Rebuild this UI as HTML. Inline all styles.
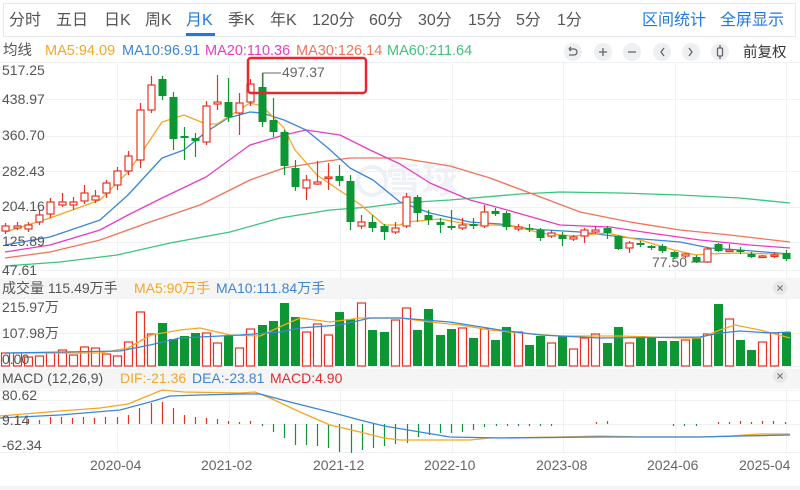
<!DOCTYPE html>
<html><head><meta charset="utf-8">
<style>
html,body{margin:0;padding:0;background:#fff;width:800px;height:490px;overflow:hidden}
body{font-family:"Liberation Sans","Noto Sans CJK SC",sans-serif}
svg{display:block}
</style></head>
<body>
<svg id="s" width="800" height="490" xmlns="http://www.w3.org/2000/svg" font-family="Liberation Sans, Noto Sans CJK SC, sans-serif">
<rect x="3.5" y="3.5" width="792" height="33" fill="#fff" stroke="#e6e8ec"/>
<g font-size="16" fill="#555">
<text x="9" y="25">分时</text><text x="56" y="25">五日</text><text x="104" y="25">日K</text><text x="145" y="25">周K</text>
<text x="186" y="25" fill="#1f7ae0">月K</text><text x="228" y="25">季K</text><text x="270" y="25">年K</text>
<text x="312" y="25">120分</text><text x="369" y="25">60分</text><text x="418" y="25">30分</text><text x="468" y="25">15分</text><text x="516" y="25">5分</text><text x="557" y="25">1分</text>
<text x="642" y="25" fill="#1f7ae0">区间统计</text><text x="720" y="25" fill="#1f7ae0">全屏显示</text>
</g>
<rect x="186" y="33" width="29" height="3" fill="#1f7ae0"/>
<g font-size="14.5">
<text x="3" y="55" fill="#555">均线</text>
<text x="45" y="55" fill="#f5a623">MA5:94.09</text>
<text x="122" y="55" fill="#3a86d8">MA10:96.91</text>
<text x="205" y="55" fill="#e83cc4">MA20:110.36</text>
<text x="296" y="55" fill="#f27357">MA30:126.14</text>
<text x="387" y="55" fill="#3cc47a">MA60:211.64</text>
</g>
<g fill="#eeeff2">
<circle cx="573" cy="52" r="9"/><circle cx="603" cy="52" r="9"/><circle cx="632" cy="52" r="9"/><circle cx="662" cy="52" r="9"/><circle cx="691" cy="52" r="9"/><circle cx="720" cy="52" r="9"/>
</g>
<g stroke="#666" stroke-width="1.3" fill="none">
<path d="M569 49h5a3 3 0 0 1 0 6h-5M569 49l2-2M569 49l2 2"/>
<path d="M599 52h8M603 48v8"/><path d="M628 52h8"/>
<path d="M664 48l-3 4 3 4"/><path d="M689 48l3 4-3 4"/>
<rect x="717.5" y="48" width="5" height="8" rx="1"/><path d="M720 45v3M720 56v3"/>
</g>
<text x="743" y="57" font-size="14.5" fill="#333">前复权</text>
<g id="grid" stroke="#f0f1f3" stroke-width="1"></g>
<text x="386" y="193" font-size="36" fill="#e8ecf2" font-weight="bold" opacity="0.7">雪球</text>
<circle cx="372" cy="181" r="14" fill="none" stroke="#e8ecf2" stroke-width="4" opacity="0.8"/>
<g id="ma"></g>
<g id="candles"></g>
<g font-size="14" fill="#555">
<text x="2" y="75">517.25</text><text x="2" y="104">438.97</text><text x="2" y="140">360.70</text><text x="2" y="176">282.43</text><text x="2" y="211">204.16</text><text x="2" y="246">125.89</text><text x="2" y="275">47.61</text>
</g>
<path d="M263 87V73h18" stroke="#666" fill="none"/>
<text x="282" y="77" font-size="14" fill="#666">497.37</text>
<path d="M705 262h-14" stroke="#666" fill="none"/>
<text x="652" y="267" font-size="14" fill="#666">77.50</text>
<rect x="248" y="58" width="118" height="35" rx="3" fill="none" stroke="#e8262b" stroke-width="2.5"/>
<rect x="0" y="278" width="800" height="20" fill="#f5f5f5"/>
<text x="2" y="293" font-size="14" fill="#555">成交量 115.49万手</text>
<text x="134" y="293" font-size="14" fill="#f5a623">MA5:90万手</text>
<text x="216" y="293" font-size="14" fill="#3a86d8">MA10:111.84万手</text>
<circle cx="780" cy="288" r="7" fill="#e8e8e8"/><path d="M777.5 285.5l5 5M782.5 285.5l-5 5" stroke="#777" stroke-width="1.2"/>
<g id="vol"></g>
<g font-size="14" fill="#555"><text x="2" y="312">215.97万</text><text x="2" y="338">107.98万</text><text x="2" y="364">0.00</text></g>
<rect x="0" y="369" width="800" height="20" fill="#f5f5f5"/>
<text x="2" y="383" font-size="14" fill="#555">MACD (12,26,9)</text>
<text x="120" y="383" font-size="14" fill="#f5a623">DIF:-21.36</text>
<text x="192" y="383" font-size="14" fill="#3a86d8">DEA:-23.81</text>
<text x="270" y="383" font-size="14" fill="#e8262b">MACD:4.90</text>
<circle cx="780" cy="376" r="7" fill="#e8e8e8"/><path d="M777.5 373.5l5 5M782.5 373.5l-5 5" stroke="#777" stroke-width="1.2"/>
<g id="macd"></g>
<g font-size="14" fill="#555"><text x="2" y="400">80.62</text><text x="2" y="425">9.14</text><text x="2" y="450">-62.34</text></g>
<g font-size="14" fill="#666">
<text x="90" y="470">2020-04</text><text x="201" y="470">2021-02</text><text x="313" y="470">2021-12</text><text x="424" y="470">2022-10</text><text x="536" y="470">2023-08</text><text x="647" y="470">2024-06</text><text x="739" y="470">2025-04</text>
</g>
<rect x="0" y="486" width="800" height="4" fill="#f3f4f6"/>
</svg>
<script>
var NS="http://www.w3.org/2000/svg";
function el(p,t,a){var e=document.createElementNS(NS,t);for(var k in a)e.setAttribute(k,a[k]);document.getElementById(p).appendChild(e);return e;}
var R="#e8321e",G="#0c9634";
[62,99,136,171,207,242,270,298,333,366,390,400,424,452].forEach(function(y){el("grid","line",{x1:0,x2:800,y1:y+.5,y2:y+.5});});
[117,229,340,452,563,675,786].forEach(function(x){el("grid","line",{x1:x+.5,x2:x+.5,y1:62,y2:452});});
var C=[[5,231,226,223,234],[17,228,226,222,230],[28,229,225,222,232],[39,222,215,210,225],[50,214,202,198,218],[62,205,202,193,207],[73,205,202,197,210],[84,201,193,185,204],[95,200,196,190,203],[106,193,183,180,198],[117,185,171,167,190],[128,171,156,151,175],[140,160,110,103,168],[151,110,85,76,113],[162,79,96,76,100],[173,97,139,92,150],[184,136,138,127,160],[195,138,141,133,157],[206,142,106,101,145],[217,104,102,75,110],[228,102,117,78,122],[239,113,103,93,135],[250,102,84,79,106],[262,87,122,73,127],[273,120,132,98,137],[284,132,166,130,175],[295,168,187,160,191],[306,188,180,175,200],[317,184,182,161,185],[328,178,177,163,190],[339,176,181,165,186],[350,181,222,175,230],[361,226,222,215,229],[372,222,228,215,232],[384,226,232,224,240],[395,232,228,222,234],[406,226,197,193,228],[417,197,213,195,222],[428,215,220,210,225],[440,222,225,218,233],[451,226,228,210,230],[462,228,225,218,230],[473,224,226,218,229],[484,226,212,205,228],[495,211,214,208,216],[506,213,227,211,230],[518,229,227,224,231],[529,228,229,224,232],[540,230,238,228,241],[551,236,233,230,238],[562,235,239,232,246],[573,239,237,235,241],[584,236,230,228,243],[595,232,230,226,234],[607,228,233,226,239],[618,236,249,235,250],[629,248,243,241,253],[640,243,245,241,247],[651,246,248,245,250],[662,246,251,244,253],[674,252,257,251,259],[685,256,254,253,258],[696,257,262,255,263],[707,262,249,247,263],[718,244,251,243,252],[729,251,250,244,252],[740,250,252,247,254],[751,254,257,252,258],[762,257,256,255,258],[774,256,255,252,258],[786,253,259,250,261]];
C.forEach(function(d){var x=d[0],o=d[1],c=d[2],up=c<=o,col=up?R:G;
el("candles","line",{x1:x+.5,x2:x+.5,y1:d[3],y2:d[4],stroke:col,"stroke-width":1.2});
var t=Math.min(o,c),h=Math.max(Math.abs(o-c),1.5);
if(up)el("candles","rect",{x:x-3,y:t,width:7,height:h,fill:"#fff",stroke:col,"stroke-width":1.2});
else el("candles","rect",{x:x-3.5,y:t,width:8,height:h,fill:col});});
function pl(g,pts,col,w){el(g,"polyline",{points:pts,fill:"none",stroke:col,"stroke-width":w||1.3,"stroke-linejoin":"round"});}
pl("ma","5,266 60,262 117,255 170,243 230,232 280,218 330,210 370,207 400,203 450,200 520,194 560,192 620,193 680,195 740,198 790,203","#3cc47a");
pl("ma","5,258 50,252 100,240 150,222 200,205 250,180 284,168 320,162 350,158 400,158 450,166 490,178 530,193 580,212 630,222 680,230 730,235 790,242","#f27357");
pl("ma","5,252 50,245 100,230 128,215 162,198 206,177 250,145 284,135 306,130 340,135 370,150 400,164 430,183 470,200 500,208 560,225 610,227 650,233 700,240 750,245 790,248","#e83cc4");
pl("ma","5,245 50,237 100,220 128,195 162,158 184,150 206,132 228,118 250,112 262,113 284,120 306,130 328,148 350,168 373,180 400,202 430,213 470,222 500,224 530,229 580,232 630,238 680,242 710,248 740,250 790,254","#3a86d8");
pl("ma","5,232 50,218 100,200 128,172 140,155 162,122 184,115 206,124 217,124 239,110 250,103 262,106 284,128 295,150 317,175 339,190 361,205 384,225 400,225 406,222 440,219 473,225 495,225 518,227 540,233 573,236 607,233 640,240 674,250 696,255 707,254 740,253 774,254 790,254","#f5a623");
var V=[353,353,357,356,353,350,355,347,348,354,356,342,312,334,323,339,336,333,333,343,336,348,329,325,321,303,317,332,324,335,312,319,303,330,332,320,308,330,309,335,329,328,338,329,340,327,332,345,336,343,336,349,338,334,343,327,343,336,338,341,341,340,337,334,304,319,340,350,342,333,332];
C.forEach(function(d,i){var up=d[2]<=d[1],col=up?R:G,t=V[i];
if(up)el("vol","rect",{x:d[0]-3.5,y:t,width:8,height:366-t,fill:"#fff",stroke:col,"stroke-width":1.2});
else el("vol","rect",{x:d[0]-4,y:t,width:9,height:366-t,fill:col});});
pl("vol","5,353 100,353 128,348 151,335 180,330 200,328 230,335 260,336 284,325 300,318 330,322 360,318 400,318 430,322 460,325 490,330 520,333 560,336 620,336 680,338 700,338 720,330 735,325 760,330 790,338","#f5a623");
pl("vol","5,353 120,351 150,345 180,338 240,335 280,332 300,328 340,325 370,318 400,318 450,322 500,330 540,335 600,338 700,337 720,333 740,331 770,333 790,332","#3a86d8");
var M=[[17,419],[28,419],[39,420],[50,417],[61,417],[72,418],[83,417],[94,418],[105,417],[117,417],[128,415],[139,408],[151,403],[162,402],[173,408],[184,415],[195,417],[206,418],[217,419],[228,421],[239,422],[250,421],[262,426],[273,432],[284,438],[295,445],[306,445],[317,446],[328,448],[339,452],[351,453],[362,450],[373,448],[384,446],[395,444],[407,443],[418,437],[429,435],[440,433],[451,433],[462,432],[473,430],[484,427],[496,426],[507,426],[518,426],[529,426],[540,426],[551,426],[596,422],[607,421],[673,426],[684,426],[696,426],[718,422],[729,422],[740,421],[751,422],[762,421],[773,421],[785,422]];
M.forEach(function(m){var col=m[1]<424?R:G;el("macd","line",{x1:m[0]+.5,x2:m[0]+.5,y1:424,y2:m[1],stroke:col,"stroke-width":1.2});});
pl("macd","0,416 60,411 100,408 128,404 150,395 162,390 184,392 240,393 255,392 270,398 300,412 330,425 360,432 384,438 400,440 430,440 470,440 490,438 560,437 600,436 640,437 680,437 700,437 730,436 760,434 790,434","#f5a623");
pl("macd","0,418 60,415 120,410 150,402 170,396 200,395 240,394 260,394 290,402 330,412 360,420 384,426 420,432 450,437 500,438 600,437 700,437 740,436 790,435","#3a86d8");
</script>
</body></html>
